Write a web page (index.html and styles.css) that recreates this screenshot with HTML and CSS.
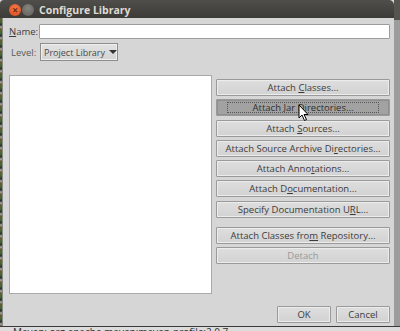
FILE: index.html
```html
<!DOCTYPE html>
<html lang="en">
<head>
  <meta charset="UTF-8" />
  <title>Configure Library</title>
  <link rel="stylesheet" href="styles.css">
</head>
<body>
  <div class="screen">
    <div class="window">
      <div class="titlebar">
        <span class="wbtn close">&times;</span>
        <span class="wbtn min"></span>
        <span class="title">Configure Library</span>
      </div>
      <div class="frame">
        <div class="strip"></div>
        <div class="dialog">
          <div class="row">
            <label class="lbl name-lbl"><u>N</u>ame:</label>
            <div class="field"></div>
          </div>
          <div class="row level-row">
            <label class="lbl level-lbl">Level:</label>
            <div class="select"><span>Project Library</span><span class="arrow"></span></div>
          </div>

          <div class="main">
            <div class="list"></div>
            <div class="buttons">
              <button><span>Attach <u>C</u>lasses...</span></button>
              <button class="pressed"><span class="focus"><span>Attach Jar Directories...</span></span></button>
              <button><span>Attach <u>S</u>ources...</span></button>
              <button><span>Attach Source Archive Di<u>r</u>ectories...</span></button>
              <button><span>Attach Anno<u>t</u>ations...</span></button>
              <button><span>Attach D<u>o</u>cumentation...</span></button>
              <button><span>Specify Documentation U<u>R</u>L...</span></button>
              <button class="sep"><span>Attach Classes fro<u>m</u> Repository...</span></button>
              <button class="disabled"><span>Detach</span></button>
            </div>
          </div>

          <div class="footer">
            <button><span>OK</span></button>
            <button><span>Cancel</span></button>
          </div>

          <svg class="cursor" width="12" height="18" viewBox="0 0 12 18">
            <path d="M1 1 L1 14 L4 11 L6.5 16.5 L8.5 15.5 L6 10.5 L10 10.5 Z" fill="#fff" stroke="#000" stroke-width="1"/>
          </svg>
        </div>
      </div>
    </div>
    <div class="side"></div>
  </div>
  <div class="below">Maven: org.apache.maven:maven-profile:2.0.7</div>
</body>
</html>
```

FILE: styles.css
```css
* { box-sizing: border-box; }
body {
  margin: 0;
  background: #d8d8d8;
  font-family: 'Open Sans', 'DejaVu Sans', sans-serif;
  font-size: 9.5px;
  color: #3c3c3c;
  width: 400px;
  height: 331px;
  overflow: hidden;
}
.screen {
  display: flex;
  height: 326px;
}
.window {
  width: 394px;
  display: flex;
  flex-direction: column;
}
.side {
  flex: 1;
  background: linear-gradient(#55544f 0, #55544f 20px, #9c9c9c 20px);
}
.titlebar {
  height: 18px;
  background: linear-gradient(#4f4e4a, #3c3b37);
  border-radius: 4px 5px 0 0;
  display: flex;
  align-items: center;
  padding-left: 9px;
}
.wbtn {
  width: 12px;
  height: 12px;
  border-radius: 50%;
  margin-right: 1px;
  margin-top: 2px;
}
.close {
  background: radial-gradient(circle at 50% 35%, #f57a4a, #d9461a);
  color: #6b2a10;
  font-size: 10px;
  line-height: 12px;
  text-align: center;
  font-weight: bold;
}
.min {
  background: radial-gradient(circle at 50% 35%, #86857f, #5d5c57);
}
.title {
  margin-left: 4px;
  margin-top: 2px;
  color: #dfdbd2;
  font-weight: bold;
  font-size: 10.5px;
}
.frame {
  flex: 1;
  display: flex;
}
.strip {
  width: 3px;
  background: repeating-linear-gradient(#6b5a2a 0, #3f6b30 4px, #2b2b2b 7px, #aaa 9px, #6b5a2a 11px);
  border-right: 1px solid #888;
}
.dialog {
  flex: 1;
  position: relative;
  background: #d6d6d6;
  padding: 6px 4px 0 6px;
  display: flex;
  flex-direction: column;
}
.row {
  display: flex;
  align-items: center;
  height: 15px;
}
.lbl {
  width: 30px;
  color: #4a4a4a;
}
.name-lbl { color: #3c3c3c; }
.level-row {
  height: 18px;
  margin-top: 4px;
}
.level-lbl {
  padding-left: 2px;
  width: 31px;
  color: #5a5a5a;
}
.field {
  flex: 1;
  height: 15px;
  background: #fff;
  border: 1px solid #9c9c9c;
  border-radius: 1px;
}
.select {
  width: 78px;
  height: 18px;
  border: 1px solid #8e8e8e;
  background: linear-gradient(#e2e2e2, #d4d4d4);
  box-shadow: inset 0 0 0 1px #eeeeee;
  padding-left: 3px;
  display: flex;
  align-items: center;
  white-space: nowrap;
  font-size: 9px;
  color: #4a4a4a;
}
.arrow {
  margin-left: 4px;
  border-left: 4px solid transparent;
  border-right: 4px solid transparent;
  border-top: 4px solid #333;
}
.main {
  display: flex;
  margin-top: 14px;
  gap: 4px;
}
.list {
  width: 203px;
  height: 219px;
  background: #fff;
  border: 1px solid #a9a9a9;
}
.buttons {
  width: 174px;
  padding-top: 4px;
  display: flex;
  flex-direction: column;
  gap: 3.3px;
}
button {
  font: inherit;
  color: #3c3c3c;
  height: 17px;
  padding: 0;
  border: 1px solid #9a9a9a;
  background: linear-gradient(#dedede, #d2d2d2);
  box-shadow: inset 0 0 0 1px #ececec;
  border-radius: 1px;
  display: flex;
  align-items: center;
  justify-content: center;
  white-space: nowrap;
}
button.pressed {
  background: #a2a2a2;
  box-shadow: inset 0 0 0 1px #8f8f8f;
  color: #2e2e2e;
}
.focus {
  width: 152px;
  height: 11px;
  border: 1px dotted #555;
  display: flex;
  align-items: center;
  justify-content: center;
}
button.sep { margin-top: 6px; }
button.disabled { color: #9a9a9a; }
.footer {
  display: flex;
  justify-content: flex-end;
  gap: 5px;
  margin-top: 12px;
}
.footer button {
  width: 54px;
}
.cursor {
  position: absolute;
  left: 295px;
  top: 86px;
}
.below {
  height: 5px;
  border-top: 1px solid #3a3a3a;
  padding-left: 13px;
  line-height: 11px;
  overflow: hidden;
  white-space: nowrap;
  color: #333;
  font-size: 10px;
  background: #dcdcdc;
}
```
